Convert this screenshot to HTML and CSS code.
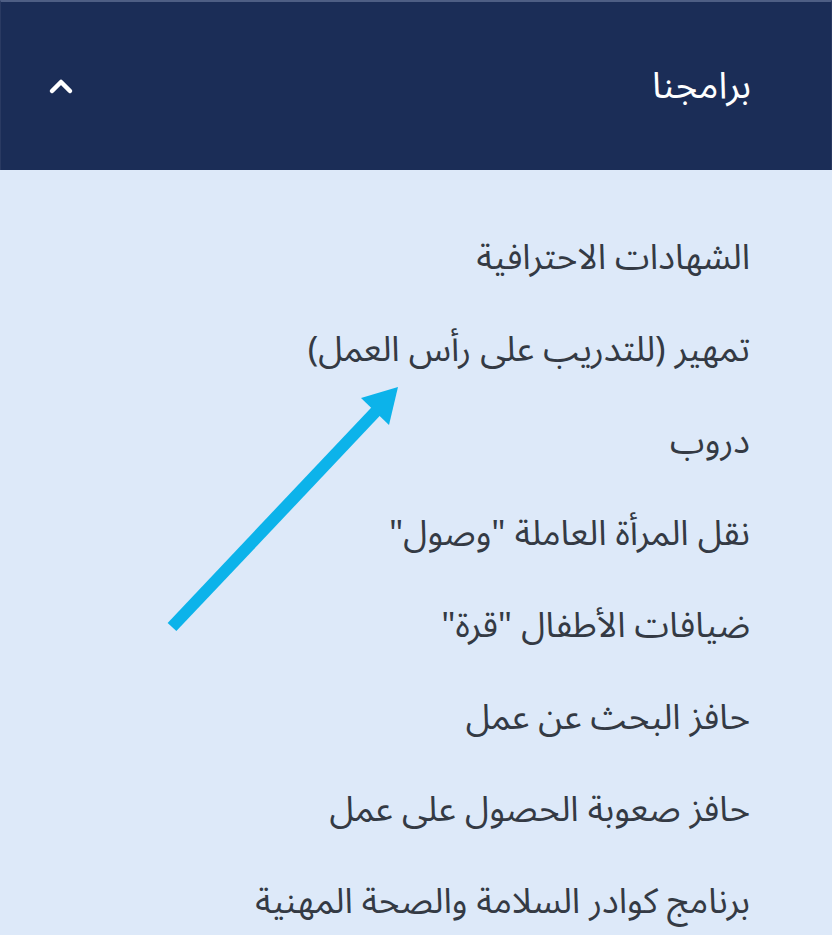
FILE: index.html
```html
<!DOCTYPE html>
<html lang="ar" dir="rtl">
<head>
    <meta charset="UTF-8">
    <meta name="viewport" content="width=device-width, initial-scale=1.0">
    <title>برامجنا</title>
    <link rel="stylesheet" href="styles.css">
</head>
<body>
    <div class="menu">
        <div class="menu-header">
            <span class="menu-title">برامجنا</span>
            <svg class="chevron" width="26" height="18" viewBox="0 0 26 18">
                <path d="M4 14 L13 5 L22 14" fill="none" stroke="#fff" stroke-width="4.5" stroke-linecap="round" stroke-linejoin="round"/>
            </svg>
        </div>
        <ul class="menu-list">
            <li>الشهادات الاحترافية</li>
            <li>تمهير (للتدريب على رأس العمل)</li>
            <li>دروب</li>
            <li>نقل المرأة العاملة "وصول"</li>
            <li>ضيافات الأطفال "قرة"</li>
            <li>حافز البحث عن عمل</li>
            <li>حافز صعوبة الحصول على عمل</li>
            <li>برنامج كوادر السلامة والصحة المهنية</li>
        </ul>
        <svg class="arrow" width="832" height="935" viewBox="0 0 832 935">
            <line x1="172" y1="627" x2="380" y2="407" stroke="#0cb3ea" stroke-width="12"/>
            <polygon points="398,387 361,398 389,425" fill="#0cb3ea"/>
        </svg>
    </div>
</body>
</html>
```

FILE: styles.css
```css
:root {
    --navy: #1b2d57;
    --bg-color: #dde9f9;
    --text-color: #343a44;
}
html, body {
    margin: 0;
    padding: 0;
    height: 100%;
}
body {
    font-family: "Noto Sans Arabic", "Noto Sans", "DejaVu Sans", sans-serif;
    background-color: var(--bg-color);
    color: var(--text-color);
    overflow: hidden;
}
.menu {
    position: relative;
    min-height: 935px;
}
.menu-header {
    display: flex;
    align-items: center;
    justify-content: space-between;
    height: 168px;
    padding: 0 80px 0 47px;
    background-color: var(--navy);
    border-top: 2px solid #4e5e84;
    border-right: 1px solid #2a3a62;
    border-left: 1px solid #2a3a62;
}
.menu-title {
    color: #fff;
    font-size: 37px;
    line-height: 1;
}
.chevron {
    display: block;
}
.menu-list {
    list-style: none;
    margin: 0;
    padding: 42px 82px 0 0;
}
.menu-list li {
    font-size: 35px;
    line-height: 50px;
    padding: 21px 0;
}
.menu-list li:last-child {
    padding-bottom: 0;
}
.arrow {
    position: absolute;
    top: 0;
    left: 0;
    pointer-events: none;
}
```
